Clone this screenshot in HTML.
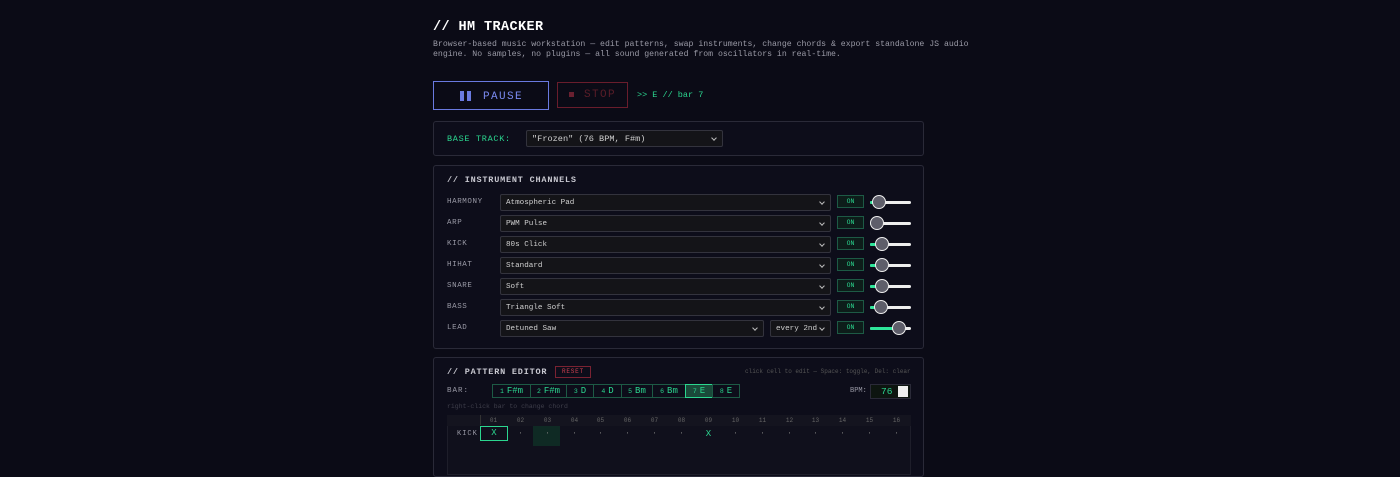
<!DOCTYPE html><html><head><style>
*{box-sizing:border-box;margin:0;padding:0}
body{width:1400px;height:467px;background:#0b0b16;font-family:"Liberation Mono",monospace;color:#ccc;position:relative;overflow:hidden}
.a{position:absolute;white-space:nowrap}
.panel{position:absolute;left:433px;width:491px;border:1px solid #2a2a38;border-radius:3px;background:#0d0d1a}
.sel{position:absolute;height:17px;background:#141418;border:1px solid #33333d;border-radius:2px;font-size:7.6px;color:#d0d0d0;padding:0 5px;display:flex;align-items:center}
.sel:after{content:"";position:absolute;right:6px;top:5px;width:3px;height:3px;border-right:1px solid #bbb;border-bottom:1px solid #bbb;transform:rotate(45deg)}
.lbl{position:absolute;left:447px;font-size:7.5px;letter-spacing:.6px;color:#9a9aa6}
.on{position:absolute;left:837px;width:27px;height:13px;border:1px solid #1d5a45;background:#0d1d1a;color:#2bd68f;font-size:6.5px;display:flex;align-items:center;justify-content:center}
.tr{position:absolute;left:870px;width:41px;height:3px;background:#eee;border-radius:2px}
.fill{position:absolute;left:870px;height:3px;background:#2ee59a;border-radius:2px}
.kn{position:absolute;width:14px;height:14px;border-radius:50%;background:#5e5e6a;border:1.5px solid #eee}
.bar{position:absolute;top:384px;height:14px;border:1px solid #1d5a45;color:#2bd68f;font-size:9px;display:flex;align-items:center;justify-content:center;gap:3px}
.bar small{font-size:6.5px}
.hd{position:absolute;top:417px;font-size:6px;color:#666;width:27px;text-align:center}
.cl{position:absolute;top:428px;font-size:8px;color:#777;width:27px;text-align:center;line-height:12px}
</style></head><body>
<div class="a" style="left:433px;top:20px;font-size:13.5px;font-weight:bold;color:#fff;letter-spacing:0.4px">// HM TRACKER</div>
<div class="a" style="left:433px;top:40px;font-size:8.2px;line-height:9.5px;color:#9a9aa6">Browser-based music workstation — edit patterns, swap instruments, change chords &amp; export standalone JS audio<br>engine. No samples, no plugins — all sound generated from oscillators in real-time.</div>
<div class="a" style="left:433px;top:81px;width:116px;height:29px;border:1.5px solid #6a7ae0"></div>
<div class="a" style="left:460px;top:91px;width:4px;height:10px;background:#6a7ae0"></div>
<div class="a" style="left:467px;top:91px;width:4px;height:10px;background:#6a7ae0"></div>
<div class="a" style="left:483px;top:91px;font-size:11px;letter-spacing:1.4px;color:#7a8af0">PAUSE</div>
<div class="a" style="left:557px;top:82px;width:71px;height:26px;border:1px solid #6a1d2c"></div>
<div class="a" style="left:569px;top:92px;width:5px;height:5px;background:#6a2030"></div>
<div class="a" style="left:584px;top:89px;font-size:11px;letter-spacing:1.4px;color:#5a1d28">STOP</div>
<div class="a" style="left:637px;top:90px;font-size:8.5px;color:#2bd68f">&gt;&gt; E // bar 7</div>

<div class="panel" style="top:121px;height:35px"></div>
<div class="a" style="left:447px;top:134px;font-size:8.5px;color:#2bd68f;letter-spacing:.7px">BASE TRACK:</div>
<div class="sel" style="left:526px;top:130px;width:197px;font-size:8.6px">"Frozen" (76 BPM, F#m)</div>

<div class="panel" style="top:165px;height:184px"></div>
<div class="a" style="left:447px;top:175px;font-size:8.5px;font-weight:bold;letter-spacing:.8px;color:#c8c8d0">// INSTRUMENT CHANNELS</div>

<div class="lbl" style="top:198px">HARMONY</div><div class="sel" style="left:500px;top:194px;width:331px">Atmospheric Pad</div><div class="on" style="top:195px">ON</div><div class="tr" style="top:201px"></div><div class="fill" style="top:201px;width:6px"></div><div class="kn" style="left:872px;top:195px"></div>
<div class="lbl" style="top:219px">ARP</div><div class="sel" style="left:500px;top:215px;width:331px">PWM Pulse</div><div class="on" style="top:216px">ON</div><div class="tr" style="top:222px"></div><div class="fill" style="top:222px;width:4px"></div><div class="kn" style="left:870px;top:216px"></div>
<div class="lbl" style="top:240px">KICK</div><div class="sel" style="left:500px;top:236px;width:331px">80s Click</div><div class="on" style="top:237px">ON</div><div class="tr" style="top:243px"></div><div class="fill" style="top:243px;width:10px"></div><div class="kn" style="left:875px;top:237px"></div>
<div class="lbl" style="top:261px">HIHAT</div><div class="sel" style="left:500px;top:257px;width:331px">Standard</div><div class="on" style="top:258px">ON</div><div class="tr" style="top:264px"></div><div class="fill" style="top:264px;width:10px"></div><div class="kn" style="left:875px;top:258px"></div>
<div class="lbl" style="top:282px">SNARE</div><div class="sel" style="left:500px;top:278px;width:331px">Soft</div><div class="on" style="top:279px">ON</div><div class="tr" style="top:285px"></div><div class="fill" style="top:285px;width:10px"></div><div class="kn" style="left:875px;top:279px"></div>
<div class="lbl" style="top:303px">BASS</div><div class="sel" style="left:500px;top:299px;width:331px">Triangle Soft</div><div class="on" style="top:300px">ON</div><div class="tr" style="top:306px"></div><div class="fill" style="top:306px;width:10px"></div><div class="kn" style="left:874px;top:300px"></div>
<div class="lbl" style="top:324px">LEAD</div><div class="sel" style="left:500px;top:320px;width:264px">Detuned Saw</div><div class="sel" style="left:770px;top:320px;width:61px">every 2nd</div><div class="on" style="top:321px">ON</div><div class="tr" style="top:327px"></div><div class="fill" style="top:327px;width:29px"></div><div class="kn" style="left:892px;top:321px"></div>

<div class="panel" style="top:357px;height:120px"></div>
<div class="a" style="left:447px;top:367px;font-size:8.5px;font-weight:bold;letter-spacing:.8px;color:#c8c8d0">// PATTERN EDITOR</div>
<div class="a" style="left:555px;top:366px;width:36px;height:12px;border:1px solid #7a2232;color:#d04050;font-size:6px;text-align:center;line-height:10px;letter-spacing:.8px">RESET</div>
<div class="a" style="left:745px;top:368px;font-size:6px;color:#555">click cell to edit — Space: toggle, Del: clear</div>
<div class="a" style="left:447px;top:387px;font-size:7.5px;color:#9a9aa6;letter-spacing:1px">BAR:</div>
<div class="bar" style="left:492px;width:39px"><small>1</small>F#m</div>
<div class="bar" style="left:530px;width:37px"><small>2</small>F#m</div>
<div class="bar" style="left:566px;width:28px"><small>3</small>D</div>
<div class="bar" style="left:593px;width:29px"><small>4</small>D</div>
<div class="bar" style="left:621px;width:32px"><small>5</small>Bm</div>
<div class="bar" style="left:652px;width:34px"><small>6</small>Bm</div>
<div class="bar" style="left:685px;width:28px;background:#1a4a3a;border:1.5px solid #2bd68f"><small>7</small>E</div>
<div class="bar" style="left:712px;width:28px"><small>8</small>E</div>
<div class="a" style="left:850px;top:387px;font-size:7px;color:#9a9aa6">BPM:</div>
<div class="a" style="left:870px;top:384px;width:41px;height:15px;border:1px solid #2a2a38;background:#0d1510;color:#2bd68f;font-size:9.5px;line-height:13px;padding-left:10px">76<span style="position:absolute;right:2px;top:1px;width:10px;height:11px;background:#eee"></span></div>
<div class="a" style="left:447px;top:403px;font-size:6.5px;color:#3e3e4a">right-click bar to change chord</div>
<div class="a" style="left:447px;top:415px;width:464px;height:60px;background:#10101c;border:1px solid #1e1e2a"></div>
<div class="a" style="left:447px;top:415px;width:464px;height:11px;background:#14141f"></div>
<div class="a" style="left:480px;top:415px;width:1px;height:10px;background:#333"></div>
<div class="a" style="left:533px;top:426px;width:27px;height:20px;background:#0f2a24"></div>
<div class="hd" style="left:480px">01</div><div class="hd" style="left:507px">02</div><div class="hd" style="left:534px">03</div><div class="hd" style="left:561px">04</div><div class="hd" style="left:587px">05</div><div class="hd" style="left:614px">06</div><div class="hd" style="left:641px">07</div><div class="hd" style="left:668px">08</div><div class="hd" style="left:695px">09</div><div class="hd" style="left:722px">10</div><div class="hd" style="left:749px">11</div><div class="hd" style="left:776px">12</div><div class="hd" style="left:802px">13</div><div class="hd" style="left:829px">14</div><div class="hd" style="left:856px">15</div><div class="hd" style="left:883px">16</div>
<div class="a" style="left:457px;top:430px;font-size:7px;color:#9a9aa6;letter-spacing:1px">KICK</div>
<div class="a" style="left:480px;top:426px;width:28px;height:15px;border:1.5px solid #2bd68f;color:#2bd68f;font-size:9px;text-align:center;line-height:12px">X</div>
<div class="cl" style="left:507px">·</div><div class="cl" style="left:534px">·</div><div class="cl" style="left:561px">·</div><div class="cl" style="left:587px">·</div><div class="cl" style="left:614px">·</div><div class="cl" style="left:641px">·</div><div class="cl" style="left:668px">·</div><div class="cl" style="left:695px;color:#2bd68f;font-size:9px">X</div><div class="cl" style="left:722px">·</div><div class="cl" style="left:749px">·</div><div class="cl" style="left:776px">·</div><div class="cl" style="left:802px">·</div><div class="cl" style="left:829px">·</div><div class="cl" style="left:856px">·</div><div class="cl" style="left:883px">·</div>
</body></html>
